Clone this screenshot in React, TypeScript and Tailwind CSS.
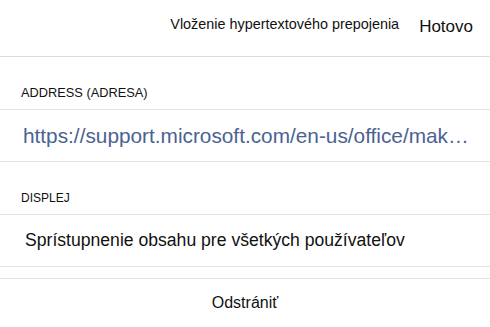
import React from "react";

const font = { fontFamily: '"Liberation Sans", Arial, sans-serif' };

export default function App() {
  return (
    <div className="w-[490px] h-[327px] bg-white text-[#111] overflow-hidden" style={font}>
      {/* header */}
      <div className="h-[57px] flex items-center justify-end border-b border-[#dcdcdc] pr-[17px]">
        <span className="text-[14.4px] mr-[20px] -mt-[6px]">Vloženie hypertextového prepojenia</span>
        <span className="text-[17px] -mt-[2px]">Hotovo</span>
      </div>

      {/* address label */}
      <div className="h-[53px] flex items-end pl-[21px] pb-[7px] border-b border-[#e4e4e4]">
        <span className="text-[12.8px] uppercase">ADDRESS (ADRESA)</span>
      </div>

      {/* url */}
      <div className="h-[52px] flex items-center pl-[23px] border-b border-[#e4e4e4]">
        <span className="text-[20.8px] text-[#4a6391] whitespace-nowrap">
          https://support.microsoft.com/en-us/office/mak…
        </span>
      </div>

      {/* display label */}
      <div className="h-[53px] flex items-end pl-[21px] pb-[7px] border-b border-[#e4e4e4]">
        <span className="text-[12px]">DISPLEJ</span>
      </div>

      {/* display text */}
      <div className="h-[52px] flex items-center pl-[25px] border-b border-[#e4e4e4]">
        <span className="text-[17.6px]">Sprístupnenie obsahu pre všetkých používateľov</span>
      </div>

      <div className="h-[12px] border-b border-[#e4e4e4]" />

      {/* remove */}
      <div className="h-[47px] flex items-center justify-center">
        <span className="text-[16px]">Odstrániť</span>
      </div>
    </div>
  );
}
